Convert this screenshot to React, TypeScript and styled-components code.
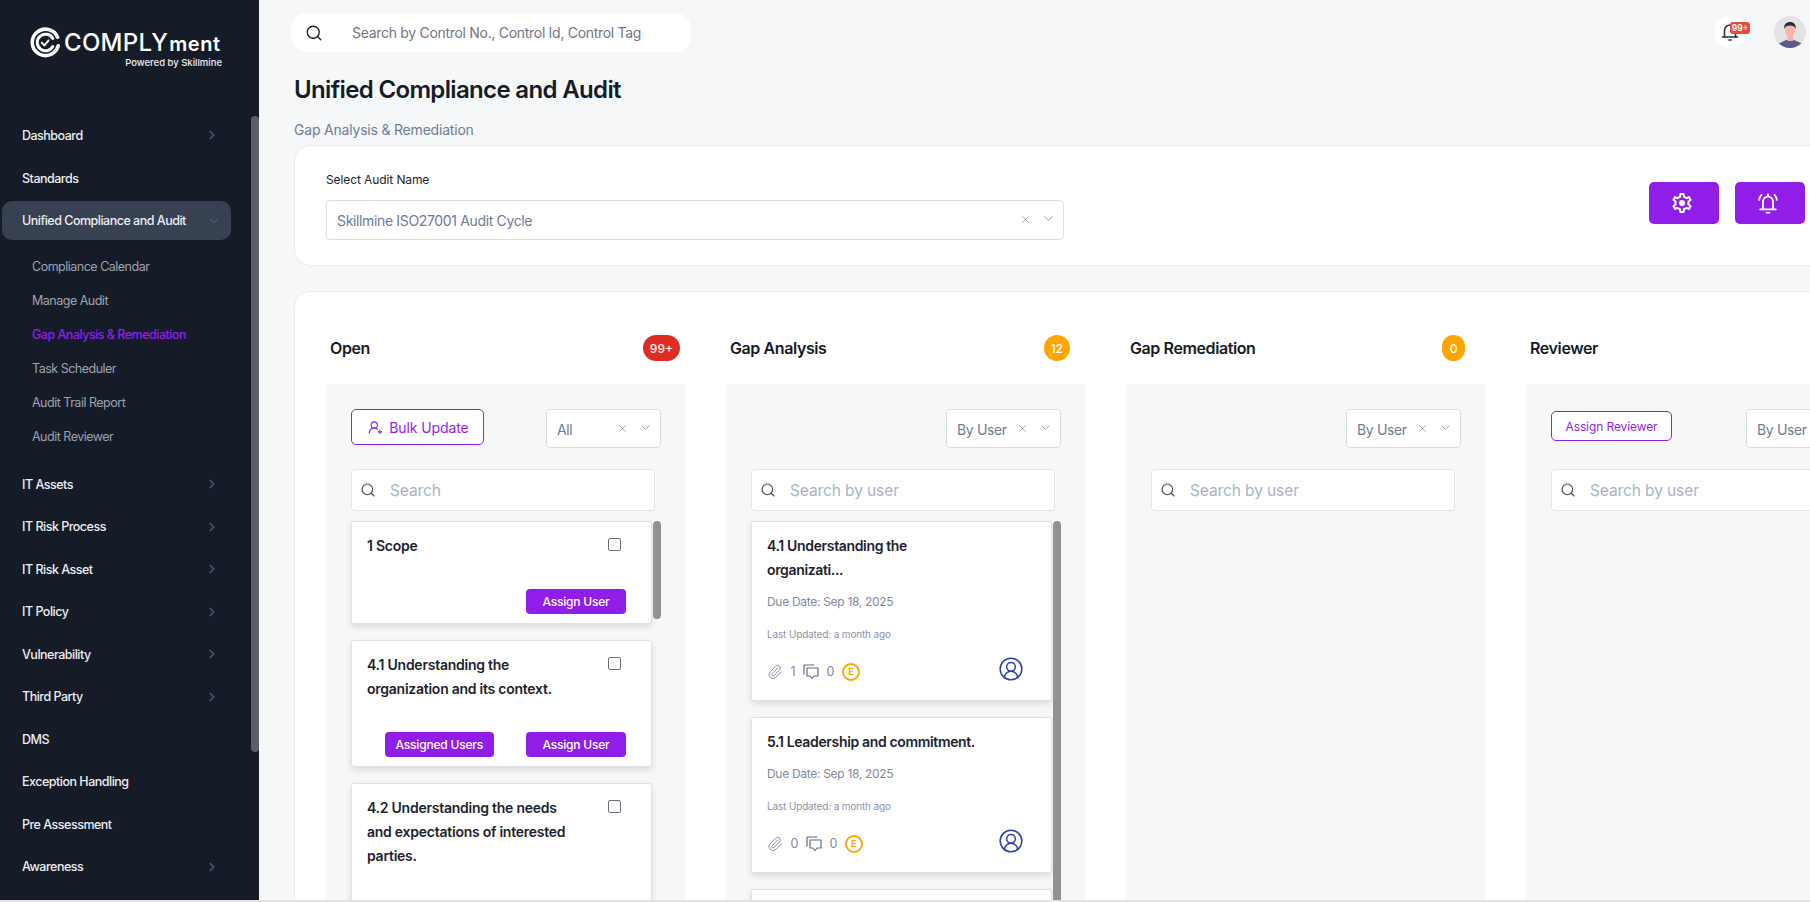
import React from 'react';
import styled, { createGlobalStyle } from 'styled-components';
import { ChevronDown, ChevronRight, CircleUserRound, Paperclip, Search, UserRoundPlus, X } from 'lucide-react';

const GlobalStyle = createGlobalStyle`
  html, body {
    margin: 0;
    height: 902px;
    overflow: hidden;
    background: #f6f7f9;
    font-family: Inter, 'Noto Sans', sans-serif;
    color: #151c27;
  }
  * {
    box-sizing: border-box;
  }
`;

const NAV_TOP = ['Dashboard', 'Standards'];
const SUB_ITEMS = ['Compliance Calendar', 'Manage Audit', 'Gap Analysis & Remediation', 'Task Scheduler', 'Audit Trail Report', 'Audit Reviewer'];
const NAV_BOTTOM = [
  { label: 'IT Assets', arrow: true },
  { label: 'IT Risk Process', arrow: true },
  { label: 'IT Risk Asset', arrow: true },
  { label: 'IT Policy', arrow: true },
  { label: 'Vulnerability', arrow: true },
  { label: 'Third Party', arrow: true },
  { label: 'DMS', arrow: false },
  { label: 'Exception Handling', arrow: false },
  { label: 'Pre Assessment', arrow: false },
  { label: 'Awareness', arrow: true },
];

const LogoMark = () => (
  <svg width='31' height='31' viewBox='0 0 31 31' fill='none' stroke='#fff'>
    <path d='M28.2 18.8A13.2 13.2 0 1 1 27.6 10.2' strokeWidth='3.6' strokeLinecap='round' />
    <path d='M22.8 19.6A8.300 8.300 0 1 1 22.8 11.400' strokeWidth='3' strokeLinecap='round' />
    <path d='M11.800 15.800l2.600 2.600 4-4.800' strokeWidth='2' strokeLinecap='round' strokeLinejoin='round' />
  </svg>
);

const GearIcon = () => (
  <svg width='24' height='24' viewBox='0 0 24 24' fill='#fff'>
    <path d='M19.43 12.98c.04-.32.07-.64.07-.98 0-.34-.03-.66-.07-.98l2.11-1.65c.19-.15.24-.42.12-.64l-2-3.46c-.09-.16-.26-.25-.44-.25-.06 0-.12.01-.17.03l-2.49 1c-.52-.4-1.08-.73-1.69-.98l-.38-2.65C14.46 2.18 14.25 2 14 2h-4c-.25 0-.46.18-.49.42l-.38 2.65c-.61.25-1.17.59-1.69.98l-2.49-1c-.06-.02-.12-.03-.18-.03-.17 0-.34.09-.43.25l-2 3.46c-.13.22-.07.49.12.64l2.11 1.65c-.04.32-.07.65-.07.98 0 .33.03.66.07.98l-2.11 1.65c-.19.15-.24.42-.12.64l2 3.46c.09.16.26.25.44.25.06 0 .12-.01.17-.03l2.49-1c.52.4 1.08.73 1.69.98l.38 2.65c.03.24.24.42.49.42h4c.25 0 .46-.18.49-.42l.38-2.65c.61-.25 1.17-.59 1.69-.98l2.49 1c.06.02.12.03.18.03.17 0 .34-.09.43-.25l2-3.46c.12-.22.07-.49-.12-.64l-2.11-1.65zm-1.98-1.71c.04.31.05.52.05.73 0 .21-.02.43-.05.73l-.14 1.13.89.7 1.08.84-.7 1.21-1.27-.51-1.04-.42-.9.68c-.43.32-.84.56-1.25.73l-1.06.43-.16 1.13-.2 1.35h-1.4l-.19-1.35-.16-1.13-1.06-.43c-.43-.18-.83-.41-1.23-.71l-.91-.7-1.06.43-1.27.51-.7-1.21 1.08-.84.89-.7-.14-1.13c-.03-.31-.05-.54-.05-.74s.02-.43.05-.73l.14-1.13-.89-.7-1.08-.84.7-1.21 1.27.51 1.04.42.9-.68c.43-.32.84-.56 1.25-.73l1.06-.43.16-1.13.2-1.35h1.39l.19 1.35.16 1.13 1.06.43c.43.18.83.41 1.23.71l.91.7 1.06-.43 1.27-.51.7 1.21-1.07.85-.89.7.14 1.13z' />
    <circle cx='12' cy='12' r='3' />
  </svg>
);

const BellRingIcon = () => (
  <svg width='22' height='22' viewBox='0 0 24 24' fill='none' stroke='#fff' strokeWidth='2' strokeLinecap='round'>
    <path d='M6.5 19v-8.5a5.5 5.5 0 0 1 11 0V19' />
    <path d='M3.500 19h17' />
    <path d='M10.500 22.500h3' />
    <path d='M12 2.500v2' />
    <path d='M2.300 8.500c.3-2.200 1.200-4 2.600-5.400' />
    <path d='M21.700 8.500c-.3-2.200-1.200-4-2.600-5.400' />
  </svg>
);

const TopBellIcon = () => (
  <svg width='20' height='20' viewBox='0 0 20 20' fill='none' stroke='#2a303c' strokeWidth='1.6' strokeLinecap='round'>
    <path d='M4.500 15V8.500a5.500 5.500 0 0 1 11 0V15' />
    <path d='M2.500 15h15' />
    <path d='M9 18h2' />
  </svg>
);

const CommentIcon = () => (
  <svg width='16' height='16' viewBox='0 0 16 16' fill='none' stroke='#5f6b8a' strokeWidth='1.2' strokeLinejoin='round'>
    <path d='M1 10.500V1h10.500' />
    <path d='M4 4h11v8h-4l-2 2.500L7 12H4z' />
  </svg>
);

const AvatarArt = () => (
  <svg width='32' height='32' viewBox='0 0 32 32'>
    <defs>
      <clipPath id='avatar-clip'>
        <circle cx='16' cy='16' r='16' />
      </clipPath>
    </defs>
    <g clipPath='url(#avatar-clip)'>
      <rect width='32' height='32' fill='#e3e3e3' />
      <path d='M4 28l8-4h8l9 4v6H4z' fill='#5b5b8c' />
      <rect x='13.500' y='17' width='5.500' height='8' fill='#f8b4ac' />
      <ellipse cx='16' cy='14' rx='5' ry='6.400' fill='#f8b4ac' />
      <path d='M10.200 13c-.5-4.500 2.300-7 5.800-7s6.300 2.500 5.700 7c-1-2.800-3-3.500-5.700-3.500S11.200 10.200 10.200 13z' fill='#2a2a3c' />
    </g>
  </svg>
);

const SearchField: React.FC<{ text: string }> = ({ text }) => (
  <SearchBox>
    <Search size={16} color='#3b4250' strokeWidth={1.6} />
    <span>{text}</span>
  </SearchBox>
);

const Dropdown: React.FC<{ value: string; $large?: boolean }> = ({ value, $large }) => (
  <SelectBox $large={$large}>
    <span>{value}</span>
    <X size={11} color='#858a9a' strokeWidth={1.8} />
    <DownMark size={15} color='#7f8498' strokeWidth={1.4} />
  </SelectBox>
);

const TaskCard: React.FC<{ title: string; assigned?: boolean; cut?: boolean }> = ({ title, assigned, cut }) => (
  <Card>
    <CardHead>
      <CardTitle>{title}</CardTitle>
      <CheckBox />
    </CardHead>
    <CardActions $space={cut ? 60 : 31}>
      {assigned && <SmallButton>Assigned Users</SmallButton>}
      {!cut && <SmallButton>Assign User</SmallButton>}
    </CardActions>
  </Card>
);

const GapCard: React.FC<{ title: string; files: number }> = ({ title, files }) => (
  <Card $gap>
    <GapTitle>{title}</GapTitle>
    <DueDate>Due Date: Sep 18, 2025</DueDate>
    <Updated>Last Updated: a month ago</Updated>
    <CardFoot>
      <Meta>
        <Paperclip size={16} color='#7a88a8' strokeWidth={1.4} />
        <span>{files}</span>
        <CommentIcon />
        <span>0</span>
        <EBadge>E</EBadge>
      </Meta>
      <CircleUserRound size={26} color='#2f41b0' strokeWidth={1.4} />
    </CardFoot>
  </Card>
);

export default function App() {
  return (
    <>
      <GlobalStyle />
      <Page>
        <Sidebar>
          <Logo>
            <LogoRow>
              <LogoMark />
              <LogoName>
                COMPLY<small>ment</small>
              </LogoName>
            </LogoRow>
            <LogoTag>Powered by Skillmine</LogoTag>
          </Logo>
          <Nav>
            {NAV_TOP.map((label, i) => (
              <NavRow key={label}>
                {label}
                {i === 0 && <ChevronRight size={14} color='#46557a' strokeWidth={3} />}
              </NavRow>
            ))}
            <NavActive>
              Unified Compliance and Audit
              <ChevronDown size={14} color='#46557a' strokeWidth={3} />
            </NavActive>
            <SubList>
              {SUB_ITEMS.map((label) => (
                <SubRow key={label} $active={label.startsWith('Gap')}>
                  {label}
                </SubRow>
              ))}
            </SubList>
            {NAV_BOTTOM.map((item) => (
              <NavRow key={item.label}>
                {item.label}
                {item.arrow && <ChevronRight size={14} color='#46557a' strokeWidth={3} />}
              </NavRow>
            ))}
          </Nav>
          <SideThumb />
        </Sidebar>

        <Main>
          <TopBar>
            <GlobalSearch>
              <Search size={18} color='#151c27' strokeWidth={1.7} />
              <span>Search by Control No., Control Id, Control Tag</span>
            </GlobalSearch>
            <TopIcons>
              <BellWrap>
                <TopBellIcon />
                <BellCount>99+</BellCount>
              </BellWrap>
              <AvatarArt />
            </TopIcons>
          </TopBar>

          <Content>
            <PageTitle>Unified Compliance and Audit</PageTitle>
            <PageSub>Gap Analysis &amp; Remediation</PageSub>

            <AuditCard>
              <div>
                <FieldLabel>Select Audit Name</FieldLabel>
                <Dropdown value='Skillmine ISO27001 Audit Cycle' $large />
              </div>
              <HeadButtons>
                <IconButton>
                  <GearIcon />
                </IconButton>
                <IconButton>
                  <BellRingIcon />
                </IconButton>
              </HeadButtons>
            </AuditCard>

            <Board>
              <Column>
                <ColumnHead>
                  <ColumnTitle>Open</ColumnTitle>
                  <Count $tone='#e02d24' $inset={6}>99+</Count>
                </ColumnHead>
                <Lane>
                  <Controls>
                    <OutlineButton>
                      <UserRoundPlus size={15} strokeWidth={1.7} />
                      Bulk Update
                    </OutlineButton>
                    <Dropdown value='All' />
                  </Controls>
                  <SearchField text='Search' />
                  <CardList>
                    <TaskCard title='1 Scope' />
                    <TaskCard title='4.1 Understanding the organization and its context.' assigned />
                    <TaskCard title='4.2 Understanding the needs and expectations of interested parties.' cut />
                    <ListThumb $height={98} />
                  </CardList>
                </Lane>
              </Column>

              <Column>
                <ColumnHead>
                  <ColumnTitle>Gap Analysis</ColumnTitle>
                  <Count $tone='#ffa500' $inset={16}>12</Count>
                </ColumnHead>
                <Lane>
                  <Controls>
                    <span />
                    <Dropdown value='By User' />
                  </Controls>
                  <SearchField text='Search by user' />
                  <CardList>
                    <GapCard title='4.1 Understanding the organizati...' files={1} />
                    <GapCard title='5.1 Leadership and commitment.' files={0} />
                    <BlankCard />
                    <ListThumb $height={400} />
                  </CardList>
                </Lane>
              </Column>

              <Column>
                <ColumnHead>
                  <ColumnTitle>Gap Remediation</ColumnTitle>
                  <Count $tone='#ffa500' $inset={21}>0</Count>
                </ColumnHead>
                <Lane>
                  <Controls>
                    <span />
                    <Dropdown value='By User' />
                  </Controls>
                  <SearchField text='Search by user' />
                </Lane>
              </Column>

              <Column>
                <ColumnHead>
                  <ColumnTitle>Reviewer</ColumnTitle>
                </ColumnHead>
                <Lane>
                  <Controls>
                    <ReviewerButton>Assign Reviewer</ReviewerButton>
                    <Dropdown value='By User' />
                  </Controls>
                  <SearchField text='Search by user' />
                </Lane>
              </Column>
            </Board>
          </Content>
        </Main>
      </Page>
    </>
  );
}

const Page = styled.div`
  display: flex;
  height: 902px;
  border-bottom: 2px solid #e2e2e2;
  overflow: hidden;
`;

const Sidebar = styled.aside`
  position: relative;
  flex: 0 0 259px;
  background: #151c27;
  overflow: hidden;
`;

const SideThumb = styled.div`
  position: absolute;
  top: 116px;
  right: 0;
  width: 8px;
  height: 636px;
  border-radius: 4px;
  background: #5c5e68;
`;

const Logo = styled.div`
  height: 114px;
  padding: 27px 0 0 30px;
  width: 222px;
  display: flex;
  flex-direction: column;
`;

const LogoRow = styled.div`
  display: flex;
  align-items: center;
  gap: 3px;
  height: 31px;
`;

const LogoName = styled.span`
  font-size: 24px;
  font-weight: 500;
  letter-spacing: 0.3px;
  color: #fff;
  small {
    font-size: 20px;
    font-weight: 600;
    letter-spacing: 0.6px;
    margin-left: 1px;
  }
`;

const LogoTag = styled.div`
  align-self: flex-end;
  margin-top: -1px;
  font-size: 9.5px;
  font-weight: 500;
  color: #eceef2;
`;

const Nav = styled.nav`
  display: flex;
  flex-direction: column;
`;

const NavRow = styled.div`
  display: flex;
  align-items: center;
  justify-content: space-between;
  height: 42.5px;
  width: 231px;
  padding: 0 12px 0 22px;
  font-size: 12.5px;
  font-weight: 500;
  letter-spacing: -0.5px;
  color: #eceef2;
  &:nth-child(2) {
    margin-top: 1px;
  }
`;

const NavActive = styled(NavRow)`
  height: 39px;
  width: 229px;
  margin: 1px 0 0 2px;
  padding-left: 20px;
  padding-right: 10px;
  border-radius: 10px;
  background: #374151;
`;

const SubList = styled.div`
  padding: 9px 0 10px;
`;

const SubRow = styled.div<{ $active?: boolean }>`
  display: flex;
  align-items: center;
  height: 34px;
  padding-left: 32px;
  font-size: 12.5px;
  letter-spacing: -0.5px;
  font-weight: ${(p) => (p.$active ? 500 : 400)};
  color: ${(p) => (p.$active ? '#9120e8' : '#9ca3af')};
`;

const Main = styled.main`
  flex: 1;
  min-width: 0;
  overflow: hidden;
`;

const TopBar = styled.header`
  display: flex;
  align-items: flex-start;
  justify-content: space-between;
  padding: 13px 4px 0 32px;
  height: 74px;
`;

const GlobalSearch = styled.div`
  display: flex;
  align-items: center;
  gap: 29px;
  width: 400px;
  height: 39px;
  padding-left: 14px;
  border-radius: 16px;
  background: #fff;
  font-size: 14px;
  letter-spacing: -0.3px;
  color: #6f7684;
`;

const TopIcons = styled.div`
  display: flex;
  align-items: center;
  gap: 28px;
  margin-top: 3px;
`;

const BellWrap = styled.div`
  position: relative;
  display: flex;
  align-items: center;
  justify-content: center;
  width: 32px;
  height: 32px;
  border-radius: 50%;
  background: #fff;
`;

const BellCount = styled.span`
  position: absolute;
  top: 6px;
  left: 16px;
  width: 20px;
  height: 12px;
  border-radius: 3px;
  background: #e74c3c;
  font-size: 8.5px;
  font-weight: 600;
  line-height: 12px;
  text-align: center;
  color: #fff;
`;

const Content = styled.div`
  width: 1596px;
  padding-left: 35px;
`;

const PageTitle = styled.h1`
  margin: 0;
  font-size: 24px;
  font-weight: 600;
  line-height: 32px;
  letter-spacing: -0.65px;
  color: #151c27;
`;

const PageSub = styled.div`
  margin-top: 14px;
  font-size: 14px;
  line-height: 20px;
  letter-spacing: -0.2px;
  color: #707e94;
`;

const AuditCard = styled.section`
  display: flex;
  align-items: center;
  justify-content: space-between;
  height: 121px;
  margin-top: 5px;
  padding: 0 49px 0 31px;
  border: 1px solid #e9ebef;
  border-radius: 16px;
  background: #fff;
`;

const FieldLabel = styled.div`
  margin-bottom: 12px;
  font-size: 12px;
  line-height: 16px;
  letter-spacing: -0.1px;
  color: #1b2230;
`;

const SelectBox = styled.div<{ $large?: boolean }>`
  display: flex;
  align-items: center;
  gap: 10px;
  flex: 0 0 auto;
  width: ${(p) => (p.$large ? '738px' : '115px')};
  height: ${(p) => (p.$large ? '40px' : '39px')};
  padding: 0 7.5px 0 10px;
  border: 1px solid #dcdee3;
  border-radius: 4px;
  background: #fff;
  font-size: 14px;
  letter-spacing: -0.35px;
  color: #6f7a9a;
  span {
    flex: 1;
    padding-top: 2px;
    white-space: nowrap;
  }
`;

const DownMark = styled(ChevronDown)`
  margin-top: -3px;
`;

const HeadButtons = styled.div`
  display: flex;
  gap: 16px;
  margin-bottom: 6px;
`;

const IconButton = styled.button`
  display: flex;
  align-items: center;
  justify-content: center;
  width: 70px;
  height: 42px;
  padding: 0 4px 0 0;
  border: 0;
  border-radius: 5px;
  background: #911ee8;
`;

const Board = styled.section`
  display: flex;
  gap: 40px;
  margin-top: 25px;
  height: 700px;
  padding: 43px 0 0 31px;
  border: 1px solid #e9ebef;
  border-radius: 16px;
  background: #fff;
`;

const Column = styled.div`
  flex: 0 0 360px;
  display: flex;
  flex-direction: column;
`;

const ColumnHead = styled.div`
  display: flex;
  align-items: center;
  justify-content: space-between;
  height: 26px;
  margin-bottom: 23px;
  padding-left: 4px;
`;

const ColumnTitle = styled.h2`
  margin: 0;
  font-size: 16px;
  font-weight: 600;
  letter-spacing: -0.4px;
  color: #151c27;
`;

const Count = styled.span<{ $tone: string; $inset: number }>`
  display: inline-flex;
  align-items: center;
  justify-content: center;
  min-width: 23px;
  height: 26px;
  padding: 0 7px;
  margin-right: ${(p) => p.$inset}px;
  border-radius: 13px;
  background: ${(p) => p.$tone};
  font-size: 12px;
  font-weight: 500;
  color: #fff;
`;

const Lane = styled.div`
  flex: 1;
  padding: 25px 25px 0;
  border-radius: 4px;
  background: #f7f7f7;
`;

const Controls = styled.div`
  display: flex;
  align-items: flex-start;
  justify-content: space-between;
  height: 39px;
  margin-bottom: 21px;
`;

const OutlineButton = styled.button`
  display: flex;
  align-items: center;
  justify-content: center;
  gap: 6px;
  width: 133px;
  height: 36px;
  padding: 0 0 0 2px;
  border: 1px solid #911ee8;
  border-radius: 5px;
  background: #fff;
  font-family: inherit;
  font-size: 14px;
  letter-spacing: -0.1px;
  color: #911ee8;
`;

const ReviewerButton = styled(OutlineButton)`
  width: 121px;
  height: 30px;
  margin-top: 2px;
  padding: 0;
  font-size: 12px;
`;

const SearchBox = styled.div`
  display: flex;
  align-items: center;
  gap: 14px;
  width: 304px;
  height: 42px;
  padding-left: 8px;
  border: 1px solid #e1e3e7;
  border-radius: 4px;
  background: #fff;
  font-size: 15.5px;
  letter-spacing: -0.1px;
  color: #a9b4c4;
`;

const CardList = styled.div`
  position: relative;
  display: flex;
  flex-direction: column;
  gap: 16px;
  width: 310px;
  margin-top: 10px;
`;

const ListThumb = styled.div<{ $height: number }>`
  position: absolute;
  top: 0;
  right: 0;
  width: 8px;
  height: ${(p) => p.$height}px;
  border-radius: 4px;
  background: #929296;
`;

const Card = styled.article<{ $gap?: boolean }>`
  width: 301px;
  padding: ${(p) => (p.$gap ? '12px 27px 19px 15px' : '12px 25px 9px 15px')};
  border: 1px solid #dfe1e5;
  border-radius: 3px;
  background: #fff;
  box-shadow: 0 3px 6px rgba(20, 25, 40, 0.12);
`;

const BlankCard = styled(Card)`
  height: 120px;
`;

const CardHead = styled.div`
  display: flex;
  align-items: flex-start;
  justify-content: space-between;
`;

const CardTitle = styled.div`
  width: 210px;
  font-size: 14px;
  font-weight: 600;
  line-height: 24px;
  letter-spacing: -0.25px;
  color: #1d232e;
`;

const CheckBox = styled.span`
  flex: 0 0 13px;
  height: 13px;
  margin: 4px 5px 0 0;
  border: 1px solid #6a6d75;
  border-radius: 2px;
  background: #fff;
`;

const CardActions = styled.div<{ $space: number }>`
  display: flex;
  justify-content: flex-end;
  gap: 32px;
  min-height: 25px;
  margin-top: ${(p) => p.$space}px;
`;

const SmallButton = styled.button`
  height: 25px;
  min-width: 100px;
  padding: 0 11px;
  border: 0;
  border-radius: 4px;
  background: #911ee8;
  font-family: inherit;
  font-size: 12px;
  font-weight: 500;
  letter-spacing: -0.2px;
  color: #fff;
`;

const GapTitle = styled(CardTitle)`
  width: 213px;
  letter-spacing: -0.35px;
`;

const DueDate = styled.div`
  margin-top: 10px;
  font-size: 12px;
  line-height: 20px;
  letter-spacing: -0.3px;
  color: #7e89a6;
`;

const Updated = styled.div`
  margin-top: 12px;
  font-size: 10px;
  line-height: 20px;
  letter-spacing: -0.15px;
  color: #8a93ad;
`;

const CardFoot = styled.div`
  display: flex;
  align-items: center;
  justify-content: space-between;
  height: 25px;
  margin-top: 12px;
`;

const Meta = styled.div`
  display: flex;
  align-items: center;
  gap: 7.5px;
  margin-top: 6px;
  font-size: 12.5px;
  color: #7e89a6;
`;

const EBadge = styled.span`
  display: flex;
  align-items: center;
  justify-content: center;
  width: 18px;
  height: 18px;
  border: 2px solid #ffa500;
  border-radius: 50%;
  font-size: 9px;
  font-weight: 700;
  color: #ffa500;
`;
